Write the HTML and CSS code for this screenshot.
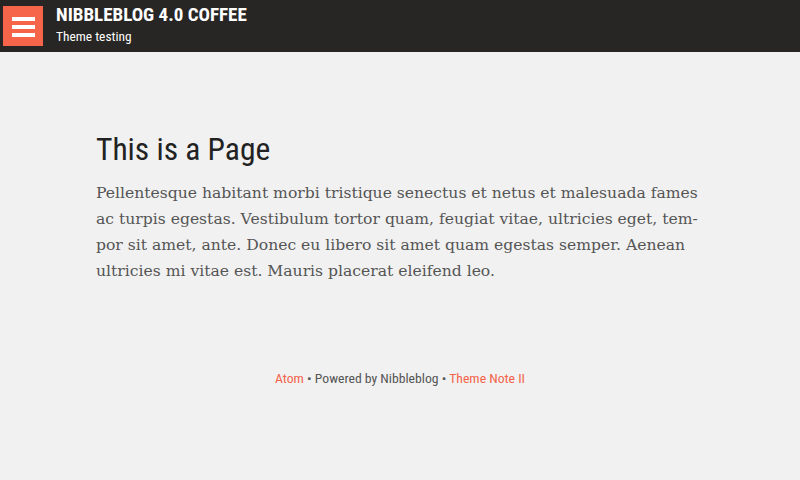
FILE: index.html
```html
<!DOCTYPE html>
<html lang="en">
<head>
<meta charset="utf-8">
<link rel="stylesheet" href="styles.css">
</head>
<body>
<header class="topbar">
  <button class="menu-btn" aria-label="Menu">
    <span class="bar"></span><span class="bar"></span><span class="bar"></span>
  </button>
  <div class="brand">
    <div class="site-title">NIBBLEBLOG 4.0 COFFEE</div>
    <div class="site-slogan">Theme testing</div>
  </div>
</header>
<main class="content">
  <article class="page">
    <h1 class="page-title">This is a Page</h1>
    <p class="page-body">Pellentesque habitant morbi tristique senectus et netus et malesuada fames ac turpis egestas. Vestibulum tortor quam, feugiat vitae, ultricies eget, tem&shy;por sit amet, ante. Donec eu libero sit amet quam egestas semper. Aenean ultricies mi vitae est. Mauris placerat eleifend leo.</p>
  </article>
  <footer class="footer">
    <a class="link" href="#">Atom</a> • Powered by Nibbleblog • <a class="link" href="#">Theme Note II</a>
  </footer>
</main>
</body>
</html>
```
FILE: styles.css
```css
html, body {
  margin: 0;
  padding: 0;
}
body {
  background: #f1f1f1;
  font-family: "Roboto Condensed", "Liberation Sans Narrow", Roboto, sans-serif;
}
.topbar {
  height: 52px;
  background: #282624;
  display: flex;
  align-items: flex-start;
  padding: 6px 0 0 3px;
  box-sizing: border-box;
}
.menu-btn {
  width: 40px;
  height: 40px;
  background: #f6644a;
  border: 0;
  padding: 2px 0 0 0;
  box-sizing: border-box;
  display: flex;
  flex-direction: column;
  align-items: center;
  justify-content: center;
  gap: 4px;
}
.bar {
  display: block;
  width: 23px;
  height: 4px;
  background: #ffffff;
}
.brand {
  margin-left: 13px;
  color: #ffffff;
}
.site-title {
  font-weight: bold;
  font-size: 19px;
  line-height: 20px;
  margin-top: -1px;
}
.site-slogan {
  font-size: 13.4px;
  line-height: 16px;
  margin-top: 4px;
}
.content {
  padding: 80px 0 0 96px;
}
.page {
  width: 608px;
}
.page-title {
  margin: 0;
  font-weight: normal;
  font-size: 31.5px;
  line-height: 36px;
  color: #222;
}
.page-body {
  margin: 12px 0 0;
  font-family: "DejaVu Serif", serif;
  font-size: 15.6px;
  line-height: 26px;
  color: #555;
  hyphens: manual;
}
.footer {
  width: 608px;
  text-align: center;
  margin-top: 86px;
  font-size: 13.7px;
  color: #555;
}
.link {
  color: #f4634a;
  text-decoration: none;
}
```
